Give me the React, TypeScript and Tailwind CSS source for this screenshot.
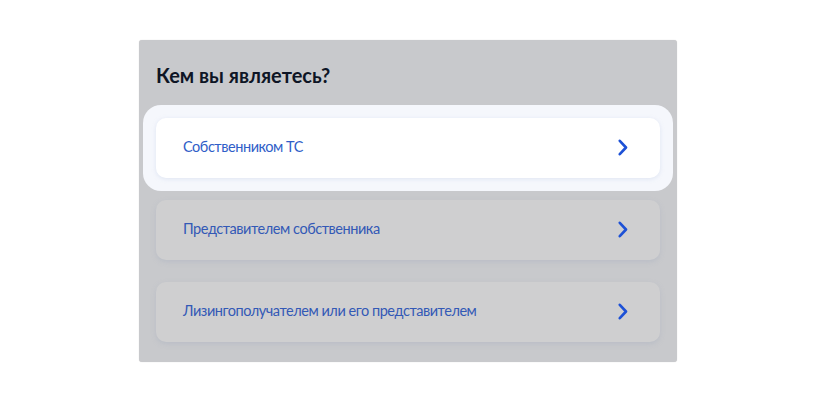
const options = [
  { label: 'Собственником ТС', active: true },
  { label: 'Представителем собственника', active: false },
  { label: 'Лизингополучателем или его представителем', active: false },
];

function Chevron() {
  return (
    <svg width="10" height="17" viewBox="0 0 10 17" fill="none" className="text-[#1d51d6]">
      <polyline
        points="1.8,1.8 8,8.5 1.8,15.2"
        stroke="currentColor"
        strokeWidth="2.6"
        strokeLinecap="round"
        strokeLinejoin="round"
      />
    </svg>
  );
}

function OptionCard({ label, active }: { label: string; active: boolean }) {
  const inner = (
    <div
      className={
        active
          ? 'flex h-[60px] items-center justify-between rounded-[10px] bg-white pb-[2px] pl-[27px] pr-[32px] shadow-[0_1px_4px_rgba(180,195,225,0.35)]'
          : 'flex h-[60px] items-center justify-between rounded-[10px] bg-[#cfcfd0] pb-[2px] pl-[27px] pr-[32px] shadow-[0_2px_5px_rgba(160,170,190,0.35)]'
      }
    >
      <span
        className={
          active
            ? 'text-[14.5px] tracking-[-0.45px] text-[#2f5ec8]'
            : 'text-[14.5px] tracking-[-0.45px] text-[#3359b6]'
        }
      >
        {label}
      </span>
      <Chevron />
    </div>
  );

  if (active) {
    return (
      <div className="-mx-[13px] -my-[13px] rounded-[18px] bg-[#f5f7fc] p-[13px]">{inner}</div>
    );
  }
  return inner;
}

export default function App() {
  return (
    <div className="flex h-[403px] w-[816px] justify-center bg-white pt-[40px] font-['Lato','Noto_Sans',sans-serif]">
      <div className="h-[322px] w-[538px] rounded-[3px] bg-[#c8c9cc] px-[17px] pt-[22px] shadow-[0_0_1px_rgba(0,0,0,0.2)]">
        <h2 className="text-[20px] font-bold leading-[27px] text-[#0e1525]">Кем вы являетесь?</h2>
        <div className="mt-[29px] flex flex-col gap-[22px]">
          {options.map((o) => (
            <OptionCard key={o.label} label={o.label} active={o.active} />
          ))}
        </div>
      </div>
    </div>
  );
}
